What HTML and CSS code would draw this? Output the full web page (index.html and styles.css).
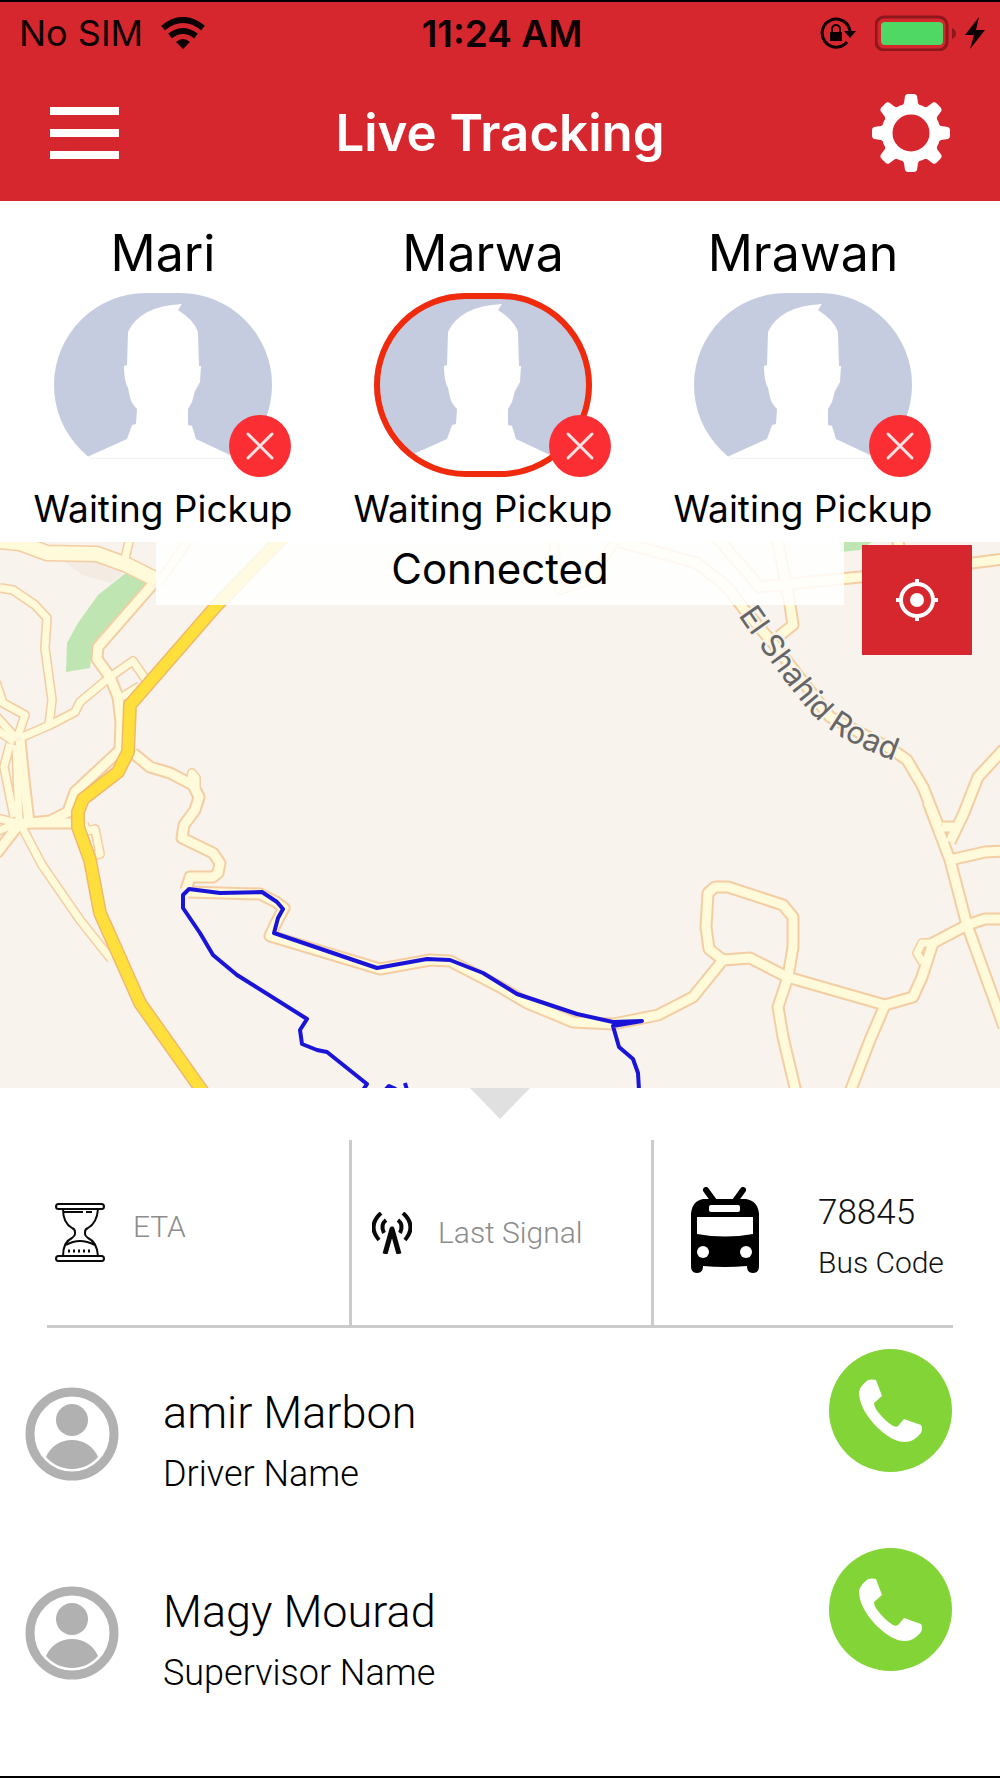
FILE: index.html
```html
<!DOCTYPE html>
<html lang="en">
<head>
    <meta charset="UTF-8">
    <meta name="viewport" content="width=device-width, initial-scale=1.0">
    <title>Live Tracking</title>
    <link rel="stylesheet" href="styles.css">
</head>
<body>
    <!-- shared icons -->
    <svg class="sprite" aria-hidden="true">
        <symbol id="face" viewBox="0 0 218 184">
            <path fill="#fff" d="M128 11L124 17Q140 27 144 39L145 73L147 73L146 89L141 98L138 109L134 116V132L138 133L142 146L176 162L218 184H0L33 164L73 146L78 132L82 131L83 116Q77 110 76 104L74 95Q70 88 70 73L73 72L74 39Q86 13 128 11Z"/>
        </symbol>
        <symbol id="cross" viewBox="0 0 62 62">
            <path fill="none" stroke="#ffe3e3" stroke-width="3" stroke-linecap="round" d="M19 19L43 43M43 19L19 43"/>
        </symbol>
        <symbol id="person" viewBox="0 0 94 94">
            <circle cx="47" cy="47" r="42" fill="none" stroke="#b1b1b1" stroke-width="9"/>
            <circle cx="47" cy="33" r="16" fill="#b1b1b1"/>
            <path fill="#b1b1b1" d="M21 70C25 60 35 53 47 53S69 60 73 70C67 77 58 82 47 82S27 77 21 70Z"/>
        </symbol>
        <symbol id="phone" viewBox="0 0 123 123">
            <path fill="#fff" d="M39 31Q43 30 47 31L53 47L45 54Q45 58 49 63Q56 72 64 77Q68 79 70 76L75 70L92 76Q94 79 92 84Q85 93 76 93Q62 93 45 75Q30 58 30 43Q31 37 39 31Z"/>
        </symbol>
    </svg>

    <header class="header">
        <div class="status-bar">
            <div class="carrier">
                <span>No SIM</span>
                <svg class="wifi" viewBox="0 0 44 32">
                    <path fill="none" stroke="#0c0002" stroke-width="6" d="M2 11Q22 -5 42 11M9 19Q22 9 35 19"/>
                    <path fill="#0c0002" d="M15 25Q22 19 29 25L22 32Z"/>
                </svg>
            </div>
            <span class="time">11:24 AM</span>
            <div class="indicators">
                <svg class="lock" viewBox="0 0 36 32">
                    <path fill="none" stroke="#0c0002" stroke-width="3" d="M27 25A14 14 0 1 1 30 14"/>
                    <path fill="#0c0002" d="M24 14H36L30 21ZM10 15H22V24H10Z"/>
                    <path fill="none" stroke="#0c0002" stroke-width="2" d="M12 15V12a4 4 0 0 1 8 0V15"/>
                </svg>
                <svg class="battery" viewBox="0 0 82 36">
                    <rect x="1" y="2" width="71" height="33" rx="8" fill="none" stroke="#8e171c" stroke-width="3"/>
                    <rect x="6" y="7" width="62" height="23" rx="4" fill="#4fd964"/>
                    <path fill="#8e171c" d="M77 13Q81 15 81 18.500T77 24Z"/>
                </svg>
                <svg class="bolt" viewBox="0 0 20 32">
                    <path fill="#0c0002" d="M14 0L0 18H9L5 32L20 13H11Z"/>
                </svg>
            </div>
        </div>
        <div class="nav-bar">
            <button class="icon-btn menu-btn" type="button" aria-label="Menu">
                <span></span><span></span><span></span>
            </button>
            <h1>Live Tracking</h1>
            <button class="icon-btn" type="button" aria-label="Settings">
                <svg class="gear" viewBox="-39 -39 78 78">
                    <g fill="#fff">
                        <path id="tooth" d="M-10 -25L-7 -30L-6 -37Q-5 -39 -3 -39H3Q5 -39 6 -37L7 -30L10 -25Z"/>
                        <use href="#tooth" transform="rotate(45)"/>
                        <use href="#tooth" transform="rotate(90)"/>
                        <use href="#tooth" transform="rotate(135)"/>
                        <use href="#tooth" transform="rotate(180)"/>
                        <use href="#tooth" transform="rotate(225)"/>
                        <use href="#tooth" transform="rotate(270)"/>
                        <use href="#tooth" transform="rotate(315)"/>
                    </g>
                    <circle r="24" fill="none" stroke="#fff" stroke-width="11"/>
                </svg>
            </button>
        </div>
    </header>

    <main>
        <section class="students">
            <article class="student">
                <h2>Mari</h2>
                <div class="photo-wrap">
                    <svg class="photo"><use href="#face"/></svg>
                    <svg class="badge"><use href="#cross"/></svg>
                </div>
                <p>Waiting Pickup</p>
            </article>
            <article class="student">
                <h2>Marwa</h2>
                <div class="photo-wrap selected">
                    <svg class="photo"><use href="#face"/></svg>
                    <svg class="badge"><use href="#cross"/></svg>
                </div>
                <p>Waiting Pickup</p>
            </article>
            <article class="student">
                <h2>Mrawan</h2>
                <div class="photo-wrap">
                    <svg class="photo"><use href="#face"/></svg>
                    <svg class="badge"><use href="#cross"/></svg>
                </div>
                <p>Waiting Pickup</p>
            </article>
        </section>

        <section class="map">
            <svg class="map-canvas" viewBox="0 0 1000 546">
                <defs>
                    <g id="roads-small">
                        <path d="M130 -5L125 17M0 46L13 48L35 63L47 76L45 106L52 158L49 183"/>
                        <path d="M20 196L50 183L75 170L80 160L110 135L133 119L146 138M122 155L140 144"/>
                        <path d="M-4 140L3 161L25 173L18 194M-4 174L17 197M-4 187L14 200"/>
                        <path d="M10 202L4 225L14 275M16 203L19 278"/>
                        <path d="M22 285L42 323L80 378L111 417M84 282L87 289L95 287L100 312L96 313"/>
                        <path d="M190 240L192 231L196 236L196 248"/>
                        <path d="M553 -4L560 48L590 38L617 -4M158 42L190 -4"/>
                        <path d="M933 401L922 401L917 411L923 421"/>
                        <path d="M-4 276L17 281L-4 290"/>
                    </g>
                    <g id="roads-big">
                        <path d="M152 43L98 105L97 117L110 135L118 155L121 180L120 208L75 250L68 270L50 279L20 282"/>
                        <path d="M20 198L24 238L29 280M20 281L-4 312M20 281H78"/>
                        <path d="M133 211L150 225L170 231L193 243L199 255L195 268L184 283L182 296L213 311L220 321L218 331L213 335H190L186 348"/>
                        <path d="M188 350L260 352L276 360L284 366L276 381L270 394L380 427L430 418L450 419L500 445L527 461L573 480L613 482L658 473L693 455L723 418L750 416L787 435L885 463L913 455L922 435L933 401L967 383L985 377L1004 377"/>
                        <path d="M723 418L709 407L706 385L708 351L715 345L728 345L783 363L793 375L793 405L788 435L778 465L783 495L796 550"/>
                        <path d="M885 463L870 498L850 550"/>
                        <path d="M777 -4L790 63L793 83L779 94M717 -4L760 45L860 35L1004 17M897 -4L900 8"/>
                        <path d="M620 0L697 21L727 45L747 71L773 101L830 175L893 208L907 218L923 245L938 283"/>
                        <path d="M1004 207L978 235L963 273L950 300M942 285H957M950 318L985 310L1004 309"/>
                        <path d="M928 260L950 318L967 383L1004 485"/>
                    </g>
                    <path id="label-line" d="M738 73Q789 147 812 172Q840 202 910 224"/>
                </defs>

                <rect width="1000" height="546" fill="#f8f3ed"/>
                <path fill="#f4ebe2" d="M62 18L83 33L111 41L123 31L100 20Z"/>
                <path fill="#bfe6b2" d="M127 30L147 40L93 103L90 126L66 130L67 101L78 81L98 53ZM840 0H872L860 8L840 10Z"/>

                <g fill="none" stroke-linejoin="round">
                    <g stroke="#f4cda2">
                        <use href="#roads-small" stroke-width="10"/>
                        <use href="#roads-big" stroke-width="13"/>
                        <path stroke-width="17" d="M-4 -1L20 1L47 11L97 12L127 23L157 38"/>
                    </g>
                    <g stroke="#fefada">
                        <use href="#roads-small" stroke-width="7"/>
                        <use href="#roads-big" stroke-width="9"/>
                        <path stroke-width="14" d="M-4 -1L20 1L47 11L97 12L127 23L157 38"/>
                    </g>
                    <path stroke="#efb96c" stroke-width="14" d="M284 -6L217 63L130 163L128 210L118 230L83 257L78 270V285L90 318L100 371L140 461L203 550"/>
                    <path stroke="#ffdf3c" stroke-width="11" d="M284 -6L217 63L130 163L128 210L118 230L83 257L78 270V285L90 318L100 371L140 461L203 550"/>
                    <path stroke="#1a14d8" stroke-width="4" d="M363 548L367 542L327 510L317 508L302 502L300 488L307 477L237 433L213 413L200 391L183 366V353L189 347L220 351L262 350L277 360L283 367L278 376L274 391L377 426L427 417L450 418L483 431L517 452L577 472L613 480L642 479L613 484L619 505L633 517L638 531L639 548M386 547L389 544L396 547M405 541L407 548"/>
                </g>
                <text class="street"><textPath href="#label-line">El Shahid Road</textPath></text>
            </svg>
            <p class="connection">Connected</p>
            <button class="locate-btn" type="button" aria-label="My location">
                <svg viewBox="0 0 42 42">
                    <circle cx="21" cy="21" r="16" fill="none" stroke="#fff" stroke-width="4"/>
                    <circle cx="21" cy="21" r="7" fill="#fff"/>
                    <path stroke="#fff" stroke-width="4" d="M21 0V6M21 36V42M0 21H6M36 21H42"/>
                </svg>
            </button>
        </section>

        <section class="details">
            <button class="collapse-btn" type="button" aria-label="Collapse"></button>

            <div class="stats">
                <div class="stat stat-eta">
                    <svg class="hourglass" viewBox="0 0 50 60">
                        <g fill="none" stroke="#0a0a0a" stroke-width="2">
                            <rect x="1" y="1" width="48" height="5" rx="2.500"/>
                            <rect x="1" y="53" width="48" height="5" rx="2.500"/>
                            <path d="M8 6Q8 20 17 25Q20 26 20 29V31Q20 33 17 35Q8 39 8 53M43 6Q42 20 33 25Q30 26 30 29V31Q30 33 33 35Q42 39 43 53"/>
                            <path d="M9 9H28M31 9H37M11 42Q18 38 25 38T40 42"/>
                            <path stroke-width="3" stroke-dasharray="2 3" d="M13 48H38"/>
                        </g>
                    </svg>
                    <span>ETA</span>
                </div>
                <div class="stat stat-signal">
                    <svg class="antenna" viewBox="0 0 40 42">
                        <g fill="none" stroke="#0a0a0a">
                            <path stroke-width="4" d="M9 1Q-5 14 7 28M31 1Q45 14 33 28"/>
                            <path stroke-width="4" d="M14 8Q8 13 12 21M26 8Q32 13 28 21"/>
                            <path stroke-width="5" stroke-linejoin="round" d="M13 42L20 17L27 42"/>
                        </g>
                    </svg>
                    <span>Last Signal</span>
                </div>
                <div class="stat stat-bus">
                    <svg class="bus" viewBox="0 0 70 86">
                        <path stroke="#000" stroke-width="6" stroke-linecap="round" d="M16 3L24 14M53 3L45 14"/>
                        <path d="M13 12H56Q68 14 69 27V79Q69 86 63 86Q57 86 57 79Q35 81 13 79Q13 86 7 86Q1 86 1 79V27Q2 14 13 12Z"/>
                        <g fill="#fff">
                            <rect x="19" y="18" width="31" height="7" rx="2"/>
                            <path d="M7 30H63V47Q35 52 7 47Z"/>
                            <circle cx="13" cy="65" r="6"/>
                            <circle cx="56" cy="65" r="6"/>
                        </g>
                    </svg>
                    <div>
                        <p class="bus-number">78845</p>
                        <p class="bus-label">Bus Code</p>
                    </div>
                </div>
            </div>

            <div class="contact">
                <svg class="contact-photo"><use href="#person"/></svg>
                <div class="contact-text">
                    <p class="contact-name">amir Marbon</p>
                    <p class="contact-role">Driver Name</p>
                </div>
                <button class="call-btn" type="button" aria-label="Call driver">
                    <svg><use href="#phone"/></svg>
                </button>
            </div>
            <div class="contact">
                <svg class="contact-photo"><use href="#person"/></svg>
                <div class="contact-text">
                    <p class="contact-name">Magy Mourad</p>
                    <p class="contact-role">Supervisor Name</p>
                </div>
                <button class="call-btn" type="button" aria-label="Call supervisor">
                    <svg><use href="#phone"/></svg>
                </button>
            </div>
        </section>
    </main>
</body>
</html>
```

FILE: styles.css
```css
* {
    margin: 0;
    padding: 0;
    box-sizing: border-box;
}
body {
    min-height: 100vh;
    border-top: 2px solid #000;
    border-bottom: 2px solid #000;
    background: #fff;
    color: #000;
    font-family: Inter, "Liberation Sans", sans-serif;
}
svg {
    display: block;
}
button {
    border: none;
    background: none;
    cursor: pointer;
}
.sprite {
    position: absolute;
    width: 0;
    height: 0;
}

/* header */
.header {
    background: #d7272e;
}
.status-bar {
    display: grid;
    grid-template-columns: 1fr auto 1fr;
    align-items: center;
    height: 62px;
    padding: 0 15px 0 19px;
    color: #0c0002;
    font-size: 36px;
}
.carrier, .indicators {
    display: flex;
    align-items: center;
}
.carrier {
    gap: 18px;
}
.wifi {
    width: 44px;
    height: 32px;
}
.time {
    font-size: 37px;
    font-weight: 600;
}
.indicators {
    justify-content: flex-end;
}
.lock {
    width: 36px;
    height: 32px;
    margin-right: 19px;
}
.battery {
    width: 82px;
    height: 36px;
    margin-right: 8px;
}
.bolt {
    width: 20px;
    height: 32px;
}
.nav-bar {
    display: flex;
    align-items: center;
    justify-content: space-between;
    height: 137px;
    padding: 0 50px;
}
.nav-bar h1 {
    color: #fff;
    font-size: 51px;
    font-weight: 600;
}
.menu-btn {
    display: flex;
    flex-direction: column;
    gap: 14px;
    width: 78px;
}
.menu-btn span {
    width: 69px;
    height: 8px;
    background: #fff;
}
.gear {
    width: 78px;
    height: 78px;
}

/* students */
.students {
    display: grid;
    grid-template-columns: repeat(3, 1fr);
    padding: 20px 37px 11px 3px;
}
.student {
    display: flex;
    flex-direction: column;
    align-items: center;
}
.student h2 {
    margin-bottom: 8px;
    font-size: 50px;
    font-weight: 400;
    line-height: 64px;
}
.student p {
    margin-top: 10px;
    font-size: 37px;
    line-height: 44px;
}
.photo-wrap {
    position: relative;
    width: 218px;
    height: 184px;
}
.photo {
    width: 100%;
    height: 100%;
    border-radius: 92px;
    background: #c5cce0;
}
.selected::after {
    content: "";
    position: absolute;
    inset: 0;
    border: 6px solid #f02a0c;
    border-radius: 92px;
}
.badge {
    position: absolute;
    right: -19px;
    bottom: 0;
    z-index: 1;
    width: 62px;
    height: 62px;
    border-radius: 50%;
    background: #fb2f33;
}

/* hide the seam of the photo background under the white shoulders */
.photo-wrap:not(.selected) .photo {
    clip-path: polygon(0 0, 100% 0, 100% 90%, 0 90%);
}

/* map */
.map {
    position: relative;
}
.map-canvas {
    width: 100%;
    height: auto;
}
.street {
    fill: #666;
    stroke: #f8f3ed;
    stroke-width: 4px;
    paint-order: stroke;
    font-size: 31px;
}
.connection {
    position: absolute;
    top: 0;
    left: 156px;
    right: 156px;
    background: rgba(255, 255, 255, 0.85);
    font-size: 42px;
    line-height: 54px;
    padding-bottom: 9px;
    text-align: center;
}
.locate-btn {
    position: absolute;
    top: 3px;
    right: 28px;
    display: flex;
    align-items: center;
    justify-content: center;
    width: 110px;
    height: 110px;
    background: #d7272e;
}
.locate-btn svg {
    width: 42px;
    height: 42px;
}

/* bus details */
.details {
    font-family: Roboto, "Liberation Sans", sans-serif;
    font-weight: 300;
}
.collapse-btn {
    display: block;
    width: 60px;
    height: 31px;
    margin: 0 auto 21px;
    background: #e0e0e1;
    clip-path: polygon(0 0, 100% 0, 50% 100%);
}
.stats {
    display: grid;
    grid-template-columns: repeat(3, 1fr);
    margin: 0 47px;
    border-bottom: 3px solid #cbcbcb;
}
.stat {
    display: flex;
    align-items: center;
    height: 185px;
    border-left: 3px solid #cbcbcb;
    color: #8c8c8c;
    font-size: 30px;
}
.stat-eta {
    gap: 28px;
    padding-left: 8px;
    border-left: none;
}
.stat-eta span {
    padding-bottom: 12px;
}
.stat-signal {
    gap: 26px;
    padding-left: 20px;
}
.stat-bus {
    gap: 58px;
    padding-left: 36px;
    color: #111;
}
.hourglass {
    width: 50px;
    height: 60px;
}
.antenna {
    width: 40px;
    height: 42px;
}
.bus {
    width: 70px;
    height: 86px;
    margin-bottom: 5px;
}
.bus-number {
    font-size: 35px;
    line-height: 60px;
}
.bus-label {
    line-height: 40px;
}

/* contacts */
.contact {
    display: flex;
    align-items: flex-start;
    padding: 21px 48px 23px 25px;
}
.contact-photo {
    width: 94px;
    height: 94px;
    margin-top: 38px;
}
.contact-text {
    flex: 1;
    padding: 33px 0 0 44px;
}
.contact-name {
    font-size: 45px;
    line-height: 62px;
}
.contact-role {
    font-size: 36px;
    line-height: 60px;
}
.call-btn {
    width: 123px;
    height: 123px;
    border-radius: 50%;
    background: #82d437;
}
.call-btn svg {
    width: 100%;
    height: 100%;
}
```
